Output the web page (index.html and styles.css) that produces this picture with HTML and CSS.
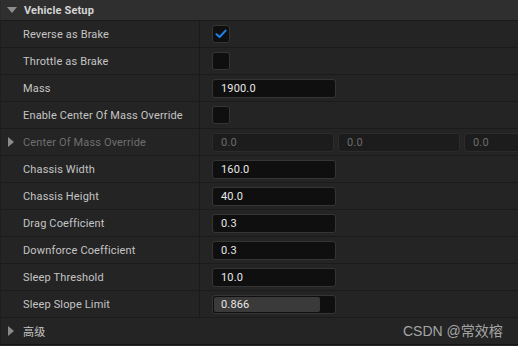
FILE: index.html
```html
<!DOCTYPE html>
<html lang="zh">
  <head>
    <meta charset="utf-8">
    <link rel="stylesheet" href="styles.css">
    <title>Vehicle Setup</title>
  </head>
  <body>
    <div class="panel">
      <div class="header">
        <span class="arrow down"></span>
        <span class="title">Vehicle Setup</span>
      </div>
      <div class="row">
        <div class="name">Reverse as Brake</div>
        <div class="value">
          <span class="check">
            <svg width="12" height="10" viewBox="0 0 12 10"><path d="M1.5 5.2 L4.6 8 L10.6 1.6" fill="none" stroke="#1f83ec" stroke-width="2" stroke-linecap="round" stroke-linejoin="round"/></svg>
          </span>
        </div>
      </div>
      <div class="row">
        <div class="name">Throttle as Brake</div>
        <div class="value"><span class="check"></span></div>
      </div>
      <div class="row">
        <div class="name">Mass</div>
        <div class="value"><span class="field">1900.0</span></div>
      </div>
      <div class="row">
        <div class="name">Enable Center Of Mass Override</div>
        <div class="value"><span class="check"></span></div>
      </div>
      <div class="row disabled">
        <div class="name"><span class="arrow right"></span>Center Of Mass Override</div>
        <div class="value">
          <span class="field off">0.0</span>
          <span class="field off">0.0</span>
          <span class="field off">0.0</span>
        </div>
      </div>
      <div class="row">
        <div class="name">Chassis Width</div>
        <div class="value"><span class="field">160.0</span></div>
      </div>
      <div class="row">
        <div class="name">Chassis Height</div>
        <div class="value"><span class="field">40.0</span></div>
      </div>
      <div class="row">
        <div class="name">Drag Coefficient</div>
        <div class="value"><span class="field">0.3</span></div>
      </div>
      <div class="row">
        <div class="name">Downforce Coefficient</div>
        <div class="value"><span class="field">0.3</span></div>
      </div>
      <div class="row">
        <div class="name">Sleep Threshold</div>
        <div class="value"><span class="field">10.0</span></div>
      </div>
      <div class="row">
        <div class="name">Sleep Slope Limit</div>
        <div class="value">
          <span class="field slider"><span class="fill" style="width:86.6%"></span><span class="num">0.866</span></span>
        </div>
      </div>
      <div class="row advanced">
        <div class="name"><span class="arrow right"></span>高级</div>
        <div class="watermark">CSDN @常效榕</div>
      </div>
    </div>
  </body>
</html>
```
FILE: styles.css
```css
body{
  margin:0;
  background:#1a1a1a;
  font-family: Roboto, "Noto Sans CJK SC", sans-serif;
  font-size:11px;
  letter-spacing:0.15px;
  color:#c4c4c4;
}
.panel{
  width:518px;
  height:346px;
  overflow:hidden;
  background:#242424;
}
.header{
  height:20px;
  display:flex;
  align-items:center;
  background:#2f2f2f;
  border-bottom:1px solid #1a1a1a;
  border-left:1px solid #2a2a2a;
}
.title{
  font-weight:bold;
  font-size:11px;
  color:#d4d4d4;
  margin-left:7px;
}
.arrow{
  display:inline-block;
  width:0;
  height:0;
}
.arrow.down{
  margin-left:6px;
  border-left:5px solid transparent;
  border-right:5px solid transparent;
  border-top:6px solid #8e8e8e;
}
.arrow.right{
  position:relative;
  left:-15px;
  margin-right:-6px;
  border-top:5px solid transparent;
  border-bottom:5px solid transparent;
  border-left:6px solid #8a8a8a;
}
.row{
  height:26px;
  display:flex;
  border-bottom:1px solid #1b1b1b;
  border-left:1px solid #1e1e1e;
}
.name{
  width:199px;
  flex:none;
  display:flex;
  align-items:center;
  padding-left:22px;
  box-sizing:border-box;
  border-right:1px solid #1b1b1b;
  color:#c4c4c4;
}
.value{
  flex:1;
  display:flex;
  align-items:center;
  gap:4px;
  padding-left:12px;
}
.disabled .name{
  color:#6f6f6f;
}
.check{
  width:16px;
  height:16px;
  border:1px solid #353535;
  border-radius:3px;
  background:#0f0f0f;
  display:flex;
  align-items:center;
  justify-content:center;
}
.field{
  width:114px;
  height:17px;
  flex:none;
  border:1px solid #353535;
  border-radius:3px;
  background:#0f0f0f;
  color:#e8e8e8;
  display:flex;
  align-items:center;
  padding-left:8px;
  position:relative;
  overflow:hidden;
}
.field.off{
  width:112px;
  background:#1c1c1c;
  border-color:#2c2c2c;
  color:#6c6c6c;
}
.slider{
  padding-left:0;
  width:122px;
}
.slider .fill{
  position:absolute;
  left:1px;
  top:1px;
  bottom:1px;
  background:#3a3a3a;
  border-radius:2px;
}
.slider .num{
  position:relative;
  padding-left:8px;
}
.advanced{
  border-bottom:1px solid #161616;
  position:relative;
}
.advanced .name{
  border-right:none;
}
.watermark{
  position:absolute;
  left:402px;
  top:2px;
  font-family:"Liberation Sans", "Noto Sans CJK SC", sans-serif;
  font-size:14px;
  letter-spacing:0;
  color:#a4a4a4;
}
```
